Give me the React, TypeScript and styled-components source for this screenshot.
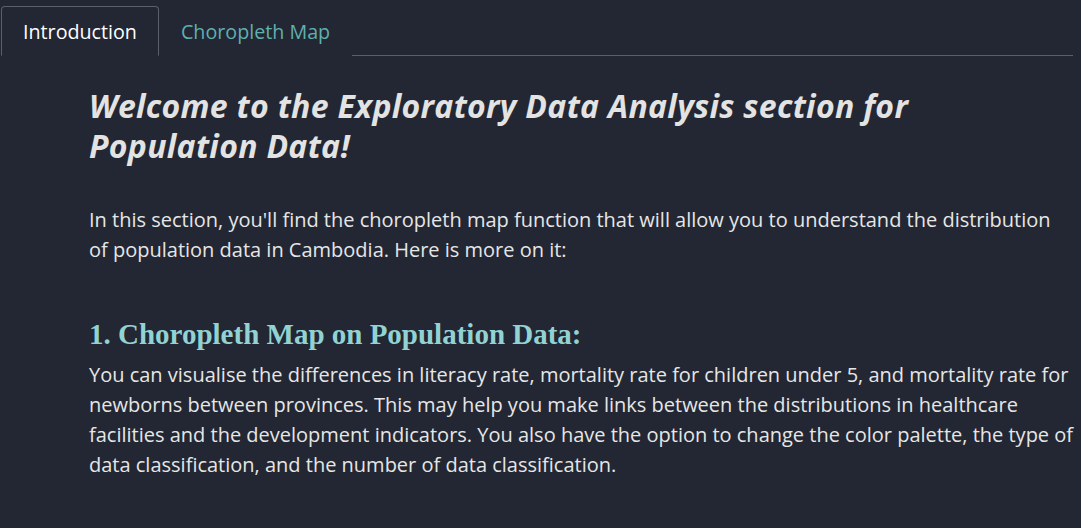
import React, { useState } from "react";
import styled, { createGlobalStyle } from "styled-components";

const Global = createGlobalStyle`
  html, body { margin: 0; padding: 0; background: #222733; }
  body { font-family: "Open Sans", "Liberation Sans", sans-serif; color: #e6e6e6; }
`;

const Page = styled.div`
  padding: 6px 0 0 1px;
  min-height: 528px;
  box-sizing: border-box;
`;

const TabBar = styled.ul`
  display: flex;
  list-style: none;
  margin: 0 8px 0 0;
  padding: 0;
  border-bottom: 1px solid #5a5f6b;
`;

const Tab = styled.li<{ $active: boolean }>`
  margin-bottom: -1px;
  padding: 0 21px;
  height: 50px;
  display: flex;
  align-items: center;
  font-size: 19.7px;
  box-sizing: border-box;
  cursor: pointer;
  border: 1px solid ${(p) => (p.$active ? "#5a5f6b" : "transparent")};
  border-bottom-color: ${(p) => (p.$active ? "#222733" : "transparent")};
  border-radius: 4px 4px 0 0;
  color: ${(p) => (p.$active ? "#ffffff" : "#5fb0b0")};
  background: #222733;
`;

const Content = styled.div`
  padding: 30px 6px 0 88px;
`;

const Title = styled.h1`
  margin: 0;
  font-size: 32px;
  line-height: 40px;
  font-weight: 700;
  font-style: italic;
  letter-spacing: 0.3px;
  color: #e3e3e3;
`;

const Para = styled.p`
  margin: 0;
  font-size: 20px;
  line-height: 30px;
  color: #e6e6e6;
`;

const Intro = styled(Para)`
  margin-top: 39px;
`;

const SubHead = styled.h2`
  margin: 52px 0 0;
  font-family: "Liberation Serif", "Times New Roman", serif;
  font-weight: 700;
  font-size: 29px;
  line-height: 34px;
  color: #92d2d2;
`;

const Body = styled(Para)`
  margin-top: 9px;
  line-height: 30px;
`;

export default function App() {
  const [tab, setTab] = useState(0);
  return (
    <Page>
      <Global />
      <TabBar>
        <Tab $active={tab === 0} onClick={() => setTab(0)}>Introduction</Tab>
        <Tab $active={tab === 1} onClick={() => setTab(1)}>Choropleth Map</Tab>
      </TabBar>
      <Content>
        <Title>
          Welcome to the Exploratory Data Analysis section for
          <br />
          Population Data!
        </Title>
        <Intro>
          In this section, you'll find the choropleth map function that will allow you to understand the distribution
          <br />
          of population data in Cambodia. Here is more on it:
        </Intro>
        <SubHead>1. Choropleth Map on Population Data:</SubHead>
        <Body>
          You can visualise the differences in literacy rate, mortality rate for children under 5, and mortality rate for
          newborns between provinces. This may help you make links between the distributions in healthcare
          facilities and the development indicators. You also have the option to change the color palette, the type of
          data classification, and the number of data classification.
        </Body>
      </Content>
    </Page>
  );
}
